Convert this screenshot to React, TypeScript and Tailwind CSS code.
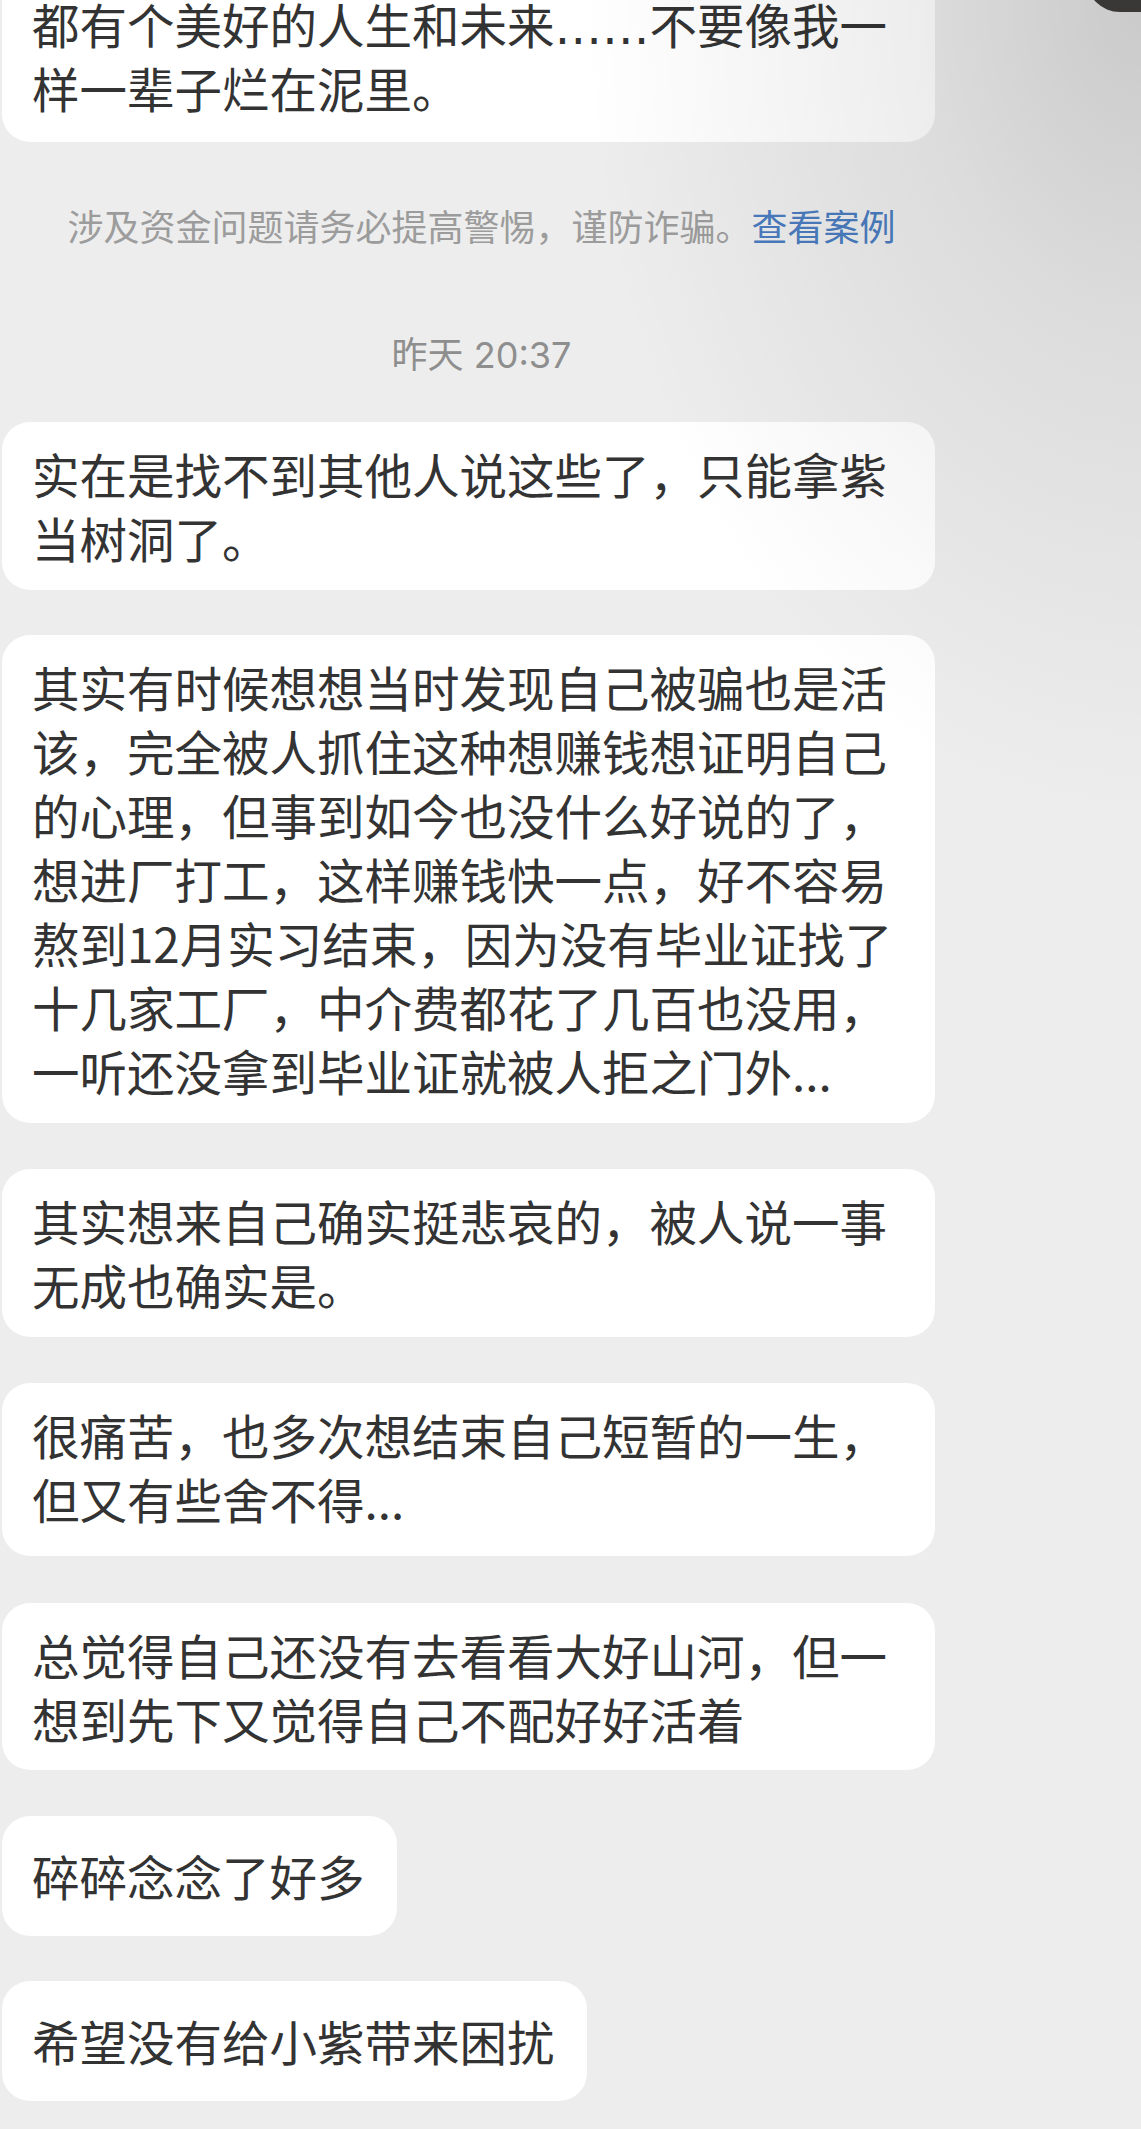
import React from "react";

const bubbleBase =
  "ml-[2px] bg-white rounded-[28px] pl-[30px] pr-[32px] text-[47.5px] leading-[64px] text-[#333333] whitespace-nowrap";

function Ell() {
  return <span className="leading-none [font-family:'DejaVu_Sans',sans-serif]">……</span>;
}

export default function App() {
  return (
    <div className="relative min-h-[2129px] w-[1141px] overflow-hidden bg-[#ededed] [font-family:'Noto_Sans_CJK_SC',sans-serif]">
      <div className="flex w-[963px] flex-col items-start">
        <div className={`${bubbleBase} mt-[-28px] h-[170px] w-[933px] py-[20px]`}>
          都有个美好的人生和未来<Ell />不要像我一
          <br />
          样一辈子烂在泥里。
        </div>

        <div className="mt-[59px] w-full text-center text-[36px] leading-[48px] text-[#9c9c9c]">
          涉及资金问题请务必提高警惕，谨防诈骗。
          <span className="text-[#4a7cbf]">查看案例</span>
        </div>

        <div className="mt-[82px] w-full text-center text-[36px] leading-[48px] text-[#8e8e8e] [font-family:'Inter','Noto_Sans_CJK_SC',sans-serif]">
          昨天 20:37
        </div>

        <div className={`${bubbleBase} mt-[43px] w-[933px] py-[20px]`}>
          实在是找不到其他人说这些了，只能拿紫
          <br />
          当树洞了。
        </div>

        <div className={`${bubbleBase} mt-[45px] w-[933px] py-[20px]`}>
          其实有时候想想当时发现自己被骗也是活
          <br />
          该，完全被人抓住这种想赚钱想证明自己
          <br />
          的心理，但事到如今也没什么好说的了，
          <br />
          想进厂打工，这样赚钱快一点，好不容易
          <br />
          熬到12月实习结束，因为没有毕业证找了
          <br />
          十几家工厂，中介费都花了几百也没用，
          <br />
          一听还没拿到毕业证就被人拒之门外...
        </div>

        <div className={`${bubbleBase} mt-[46px] w-[933px] py-[20px]`}>
          其实想来自己确实挺悲哀的，被人说一事
          <br />
          无成也确实是。
        </div>

        <div className={`${bubbleBase} mt-[46px] w-[933px] pt-[20px] pb-[25px]`}>
          很痛苦，也多次想结束自己短暂的一生，
          <br />
          但又有些舍不得...
        </div>

        <div className={`${bubbleBase} mt-[47px] w-[933px] pt-[20px] pb-[19px]`}>
          总觉得自己还没有去看看大好山河，但一
          <br />
          想到先下又觉得自己不配好好活着
        </div>

        <div className={`${bubbleBase} mt-[46px] py-[28px]`}>碎碎念念了好多</div>

        <div className={`${bubbleBase} mt-[45px] py-[28px]`}>希望没有给小紫带来困扰</div>
      </div>

      {/* shadow overlay from the floating element at top right */}
      <div className="pointer-events-none absolute left-0 top-0 h-[1000px] w-[1141px] bg-[radial-gradient(ellipse_560px_820px_at_100%_0%,rgba(0,0,0,0.15)_0%,rgba(0,0,0,0.07)_40%,rgba(0,0,0,0)_100%)]" />
      {/* dark floating element edge */}
      <div className="pointer-events-none absolute left-[1086px] top-[-60px] h-[72px] w-[90px] rounded-bl-[34px] bg-[#3a3836]" />
    </div>
  );
}
